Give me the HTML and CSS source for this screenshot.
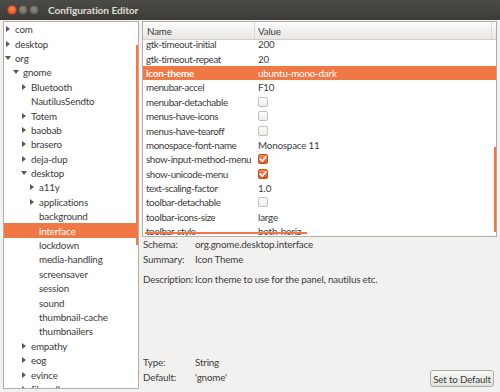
FILE: index.html
```html
<!DOCTYPE html>
<html>
<head>
<meta charset="utf-8">
<link rel="stylesheet" href="styles.css">
</head>
<body>
<div class="window">
  <div class="titlebar">
    <span class="wm close"></span><span class="wm min"></span><span class="wm max"></span>
    <span class="title">Configuration Editor</span>
  </div>
  <div class="content">
    <div class="tree-pane">
      <ul class="tree">
        <li class="node d0"><span class="exp"><i class="tri right"></i></span>com</li>
        <li class="node d0"><span class="exp"><i class="tri right"></i></span>desktop</li>
        <li class="node d0"><span class="exp"><i class="tri down"></i></span>org</li>
        <li class="node d1"><span class="exp"><i class="tri down"></i></span>gnome</li>
        <li class="node d2"><span class="exp"><i class="tri right"></i></span>Bluetooth</li>
        <li class="node d2"><span class="exp"></span>NautilusSendto</li>
        <li class="node d2"><span class="exp"><i class="tri right"></i></span>Totem</li>
        <li class="node d2"><span class="exp"><i class="tri right"></i></span>baobab</li>
        <li class="node d2"><span class="exp"><i class="tri right"></i></span>brasero</li>
        <li class="node d2"><span class="exp"><i class="tri right"></i></span>deja-dup</li>
        <li class="node d2"><span class="exp"><i class="tri down"></i></span>desktop</li>
        <li class="node d3"><span class="exp"><i class="tri right"></i></span>a11y</li>
        <li class="node d3"><span class="exp"><i class="tri right"></i></span>applications</li>
        <li class="node d3"><span class="exp"></span>background</li>
        <li class="node d3 selected"><span class="exp"></span>interface</li>
        <li class="node d3"><span class="exp"></span>lockdown</li>
        <li class="node d3"><span class="exp"></span>media-handling</li>
        <li class="node d3"><span class="exp"></span>screensaver</li>
        <li class="node d3"><span class="exp"></span>session</li>
        <li class="node d3"><span class="exp"></span>sound</li>
        <li class="node d3"><span class="exp"></span>thumbnail-cache</li>
        <li class="node d3"><span class="exp"></span>thumbnailers</li>
        <li class="node d2"><span class="exp"><i class="tri right"></i></span>empathy</li>
        <li class="node d2"><span class="exp"><i class="tri right"></i></span>eog</li>
        <li class="node d2"><span class="exp"><i class="tri right"></i></span>evince</li>
        <li class="node d2"><span class="exp"><i class="tri right"></i></span>file-roller</li>
      </ul>
      <div class="thumb tree-thumb"></div>
    </div>
    <div class="main">
      <div class="keys-pane">
        <div class="keys-header">
          <div class="hcol col-name">Name</div>
          <div class="hcol col-value">Value</div>
          <div class="hcol col-end"></div>
        </div>
        <div class="keys-view">
          <div class="keys-list">
            <div class="key-row"><span class="key-name">gtk-timeout-initial</span><span class="key-value">200</span></div>
            <div class="key-row"><span class="key-name">gtk-timeout-repeat</span><span class="key-value">20</span></div>
            <div class="key-row selected"><span class="key-name bold">icon-theme</span><span class="key-value">ubuntu-mono-dark</span></div>
            <div class="key-row"><span class="key-name">menubar-accel</span><span class="key-value">F10</span></div>
            <div class="key-row"><span class="key-name">menubar-detachable</span><span class="key-value"><span class="check"></span></span></div>
            <div class="key-row"><span class="key-name">menus-have-icons</span><span class="key-value"><span class="check"></span></span></div>
            <div class="key-row"><span class="key-name">menus-have-tearoff</span><span class="key-value"><span class="check"></span></span></div>
            <div class="key-row"><span class="key-name">monospace-font-name</span><span class="key-value">Monospace 11</span></div>
            <div class="key-row"><span class="key-name">show-input-method-menu</span><span class="key-value"><span class="check on"><svg viewBox="0 0 10 10" width="10" height="10"><path d="M2.3 5.2 L4.3 7.3 L7.9 2.8" fill="none" stroke="#fff" stroke-width="1.7" stroke-linecap="round" stroke-linejoin="round"/></svg></span></span></div>
            <div class="key-row"><span class="key-name">show-unicode-menu</span><span class="key-value"><span class="check on"><svg viewBox="0 0 10 10" width="10" height="10"><path d="M2.3 5.2 L4.3 7.3 L7.9 2.8" fill="none" stroke="#fff" stroke-width="1.7" stroke-linecap="round" stroke-linejoin="round"/></svg></span></span></div>
            <div class="key-row"><span class="key-name">text-scaling-factor</span><span class="key-value">1.0</span></div>
            <div class="key-row"><span class="key-name">toolbar-detachable</span><span class="key-value"><span class="check"></span></span></div>
            <div class="key-row"><span class="key-name">toolbar-icons-size</span><span class="key-value">large</span></div>
            <div class="key-row"><span class="key-name">toolbar-style</span><span class="key-value">both-horiz</span></div>
          </div>
        </div>
        <div class="thumb keys-vthumb"></div>
        <div class="thumb keys-hthumb"></div>
      </div>
      <div class="details">
        <div class="info">
          <span class="label">Schema:</span><span class="val">org.gnome.desktop.interface</span>
          <span class="label">Summary:</span><span class="val">Icon Theme</span>
          <span class="label desc">Description:</span><span class="val desc">Icon theme to use for the panel, nautilus etc.</span>
        </div>
        <div class="bottom">
          <div class="info">
            <span class="label">Type:</span><span class="val">String</span>
            <span class="label">Default:</span><span class="val">'gnome'</span>
          </div>
          <button class="btn">Set to Default</button>
        </div>
      </div>
    </div>
  </div>
</div>
</body>
</html>
```
FILE: styles.css
```css
* { box-sizing: border-box; margin: 0; padding: 0; }
html, body { width: 500px; height: 392px; overflow: hidden; }
body {
  background: #f2f1f0;
  font-family: Lato, "Liberation Sans", sans-serif;
  font-size: 9.8px;
  letter-spacing: -0.18px;
  color: #3c3c3c;
}
.window { display: flex; flex-direction: column; height: 392px; }

.titlebar {
  height: 20px;
  flex: none;
  display: flex;
  align-items: center;
  padding-left: 7px;
  background: linear-gradient(#4d4b47, #3c3b37);
}
.wm {
  width: 10px;
  height: 10px;
  border-radius: 50%;
  margin-right: 1px;
  box-shadow: inset 0 0 0 1px rgba(0,0,0,0.35);
}
.wm.close { background: radial-gradient(circle at 50% 40%, #f78a5b, #df5420 70%); }
.wm.min, .wm.max { background: radial-gradient(circle at 50% 40%, #8e8b85, #66645f 70%); }
.title {
  margin-left: 8px;
  font-weight: bold;
  font-size: 10.2px;
  letter-spacing: -0.1px;
  color: #dfdbd2;
}

.content {
  flex: 1;
  min-height: 0;
  display: flex;
  gap: 3px;
  padding: 1px 3px 3px 3px;
}

.tree-pane {
  position: relative;
  width: 136px;
  flex: none;
  background: #fff;
  border: 1px solid #b3b0aa;
  overflow: hidden;
}
.tree { list-style: none; }
.node {
  height: 14.4px;
  display: flex;
  align-items: center;
  white-space: nowrap;
}
.d0 { padding-left: 0; }
.d1 { padding-left: 8px; }
.d2 { padding-left: 16px; }
.d3 { padding-left: 24px; }
.node.selected { background: #f07746; color: #fff; }
.exp {
  width: 11px;
  flex: none;
  display: flex;
  align-items: center;
  padding-left: 1px;
}
.tri { display: block; width: 0; height: 0; }
.tri.right {
  margin-left: 1px;
  border-left: 4px solid #5a5955;
  border-top: 3.5px solid transparent;
  border-bottom: 3.5px solid transparent;
}
.tri.down {
  border-top: 4px solid #5a5955;
  border-left: 3.5px solid transparent;
  border-right: 3.5px solid transparent;
}

.thumb { position: absolute; background: #f07746; }
.tree-thumb { right: 0; top: 23px; width: 2px; height: 200px; }

.main {
  flex: 1;
  min-width: 0;
  display: flex;
  flex-direction: column;
}
.keys-pane {
  position: relative;
  height: 216px;
  flex: none;
  display: flex;
  flex-direction: column;
  background: #fff;
  border: 1px solid #b3b0aa;
  overflow: hidden;
}
.keys-header {
  height: 18px;
  flex: none;
  display: flex;
  background: linear-gradient(#fbfbfa, #e8e7e5);
  border-bottom: 1px solid #d3d1cd;
  position: relative;
  z-index: 1;
}
.hcol { display: flex; align-items: center; }
.col-name { width: 112px; padding-left: 4px; border-right: 1px solid #dcdad6; }
.col-value { flex: 1; padding-left: 3px; }
.col-end { width: 5px; border-left: 1px solid #dcdad6; }
.keys-view { flex: 1; min-height: 0; overflow: hidden; }
.keys-list { margin-top: -3px; }
.key-row {
  height: 14.4px;
  display: flex;
  align-items: center;
  white-space: nowrap;
}
.key-row.selected { background: #f07746; color: #fff; }
.key-name { width: 112px; flex: none; padding-left: 3px; letter-spacing: -0.38px; }
.key-name.bold { font-weight: bold; letter-spacing: -0.18px; }
.key-value { padding-left: 3px; display: flex; align-items: center; }
.check {
  width: 10px;
  height: 10px;
  display: block;
  border: 1px solid #c3c0ba;
  border-radius: 2px;
  background: linear-gradient(#fdfdfc, #eeedeb);
}
.check.on {
  border-color: #c6501f;
  background: linear-gradient(#f48a5c, #e0531d);
}
.check svg { display: block; margin: -1px; }
.keys-vthumb { right: 0; top: 125px; width: 2px; height: 85px; }
.keys-hthumb { left: 2px; bottom: 2px; width: 162px; height: 2px; }

.details {
  flex: 1;
  min-height: 0;
  display: flex;
  flex-direction: column;
  padding-left: 1px;
}
.info {
  display: grid;
  grid-template-columns: 52px auto;
  grid-auto-rows: 14.6px;
  align-items: center;
  white-space: nowrap;
}
.desc { margin-top: 11px; }
.bottom {
  margin-top: auto;
  display: flex;
  align-items: flex-end;
  justify-content: space-between;
}
.bottom .info { margin-bottom: 5px; }
.btn {
  height: 17px;
  width: 64px;
  padding: 0;
  margin: 0 3px 2px 0;
  font: inherit;
  letter-spacing: inherit;
  color: #3c3c3c;
  border: 1px solid #aeaba5;
  border-radius: 3px;
  background: linear-gradient(#f9f9f8, #e3e1de);
}
```
